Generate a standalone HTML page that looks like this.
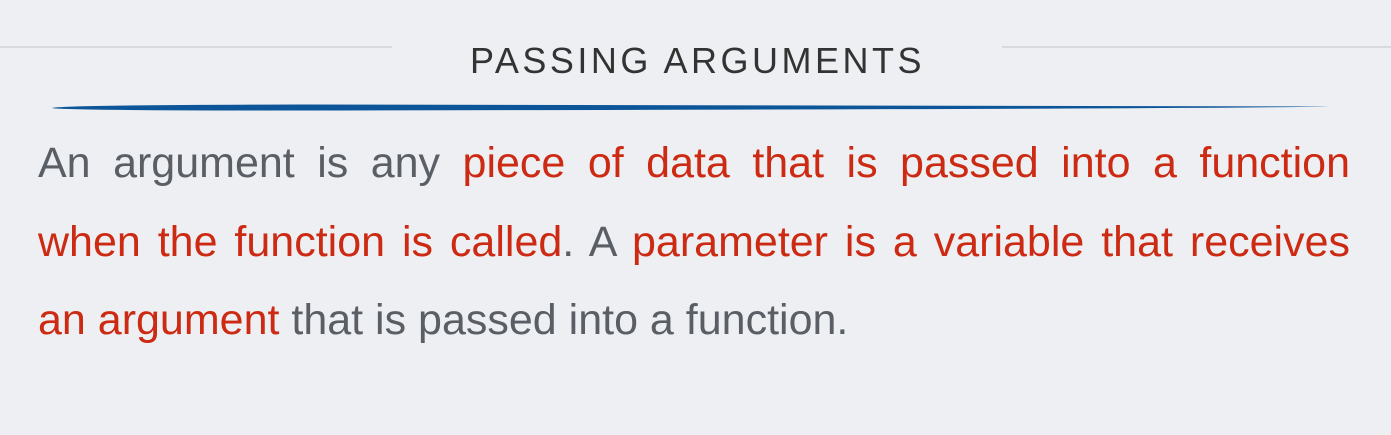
<html><head><style>
body{margin:0;width:1391px;height:435px;background:#eeeff3;overflow:hidden;position:relative;font-family:"Liberation Sans",sans-serif}
.g{position:absolute;top:46px;height:2px;background:#d8d9dd}
.t{position:absolute;left:470px;width:455px;top:38px;font-size:36px;color:#333;letter-spacing:3.5px;white-space:nowrap;text-align:justify;text-align-last:justify;line-height:46px}
.l{position:absolute;left:38px;width:1312px;font-size:43px;color:#5a5f66;text-align:justify;text-align-last:justify;white-space:nowrap;line-height:50px}
.r{color:#cc2a12}
</style></head><body>
<div class="g" style="left:0;width:392px"></div>
<div class="g" style="left:1002px;width:389px"></div>
<div class="t">PASSING ARGUMENTS</div>
<svg style="position:absolute;left:0;top:100px" width="1391" height="14"><path d="M52 8 Q60 5 300 4.5 L1330 6.5 Q1200 9 300 10.5 Q60 10.5 52 8Z" fill="#0b5598"/></svg>
<div class="l" style="top:138px">An argument is any <span class="r">piece of data that is passed into a function</span></div>
<div class="l" style="top:217px"><span class="r">when the function is called</span>. A <span class="r">parameter is a variable that receives</span></div>
<div class="l" style="top:295px;width:auto;text-align:left;text-align-last:left"><span class="r">an argument</span> that is passed into a function.</div>
</body></html>
